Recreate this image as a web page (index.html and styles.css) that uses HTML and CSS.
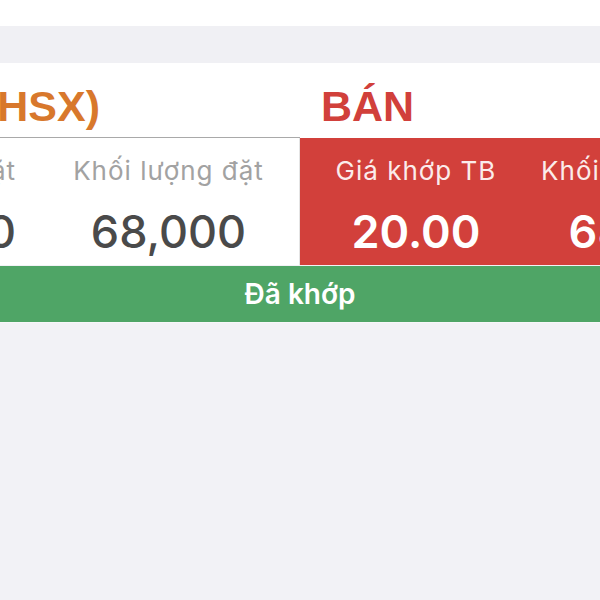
FILE: index.html
```html
<!DOCTYPE html>
<html lang="vi">

<head>
    <meta charset="UTF-8">
    <meta name="viewport" content="width=device-width, initial-scale=1.0">
    <title>Chi tiết lệnh</title>
    <link rel="stylesheet" href="styles.css">
</head>

<body>
    <div class="screen">
        <div class="top-space"></div>
        <div class="band"></div>

        <div class="ticket">
            <div class="ticket-head">
                <div class="head-symbol">HPG (HSX)</div>
                <div class="head-side">BÁN</div>
            </div>
            <div class="ticket-body">
                <div class="panel panel-order">
                    <div class="col col-end col-a">
                        <span class="label">Giá đặt</span>
                        <span class="value">20.00</span>
                    </div>
                    <div class="col col-b">
                        <span class="label">Khối lượng đặt</span>
                        <span class="value">68,000</span>
                    </div>
                </div>
                <div class="panel panel-match">
                    <div class="col col-c">
                        <span class="label">Giá khớp TB</span>
                        <span class="value">20.00</span>
                    </div>
                    <div class="col col-d">
                        <span class="label">Khối lượng khớp</span>
                        <span class="value">68,000</span>
                    </div>
                </div>
            </div>
        </div>

        <div class="status-bar">Đã khớp</div>
    </div>
</body>

</html>
```

FILE: styles.css
```css
body {
    margin: 0;
    background-color: #f2f2f6;
    font-family: 'Inter', 'Liberation Sans', sans-serif;
}

.screen {
    width: 600px;
    height: 600px;
    overflow: hidden;
}

.top-space {
    height: 26px;
    background-color: #fff;
}

.band {
    height: 37px;
    background-color: #f0f0f4;
}

.ticket {
    width: 900px;
    margin-left: -300px;
    background-color: #fff;
}

.ticket-head {
    display: flex;
    height: 75px;
}

.head-symbol,
.head-side {
    font-family: 'Liberation Sans', Arial, sans-serif;
    font-weight: bold;
    font-size: 43px;
    line-height: 48px;
    padding-top: 19px;
    box-sizing: border-box;
}

.head-symbol {
    flex: 0 0 600px;
    text-align: right;
    padding-right: 200px;
    color: #d8782c;
    border-bottom: 1px solid #a9a9a9;
}

.head-side {
    flex: 1;
    padding-left: 21px;
    color: #d1403b;
}

.ticket-body {
    display: flex;
    height: 127px;
}

.panel {
    display: flex;
    box-sizing: border-box;
}

.panel-order {
    flex: 0 0 600px;
    justify-content: flex-end;
    background-color: #fff;
    border-right: 1px solid #e4e4e4;
}

.panel-match {
    flex: 1;
    background-color: #d2403b;
}

.col {
    display: flex;
    flex-direction: column;
    align-items: center;
    flex-shrink: 0;
    padding-top: 18px;
    box-sizing: border-box;
}

.col-end {
    align-items: flex-end;
    padding-right: 22px;
}

.col-a {
    width: 180px;
}

.col-b {
    width: 261px;
}

.col-c {
    width: 232px;
}

.col-d {
    width: 232px;
}

.label {
    font-size: 26px;
    line-height: 30px;
    letter-spacing: 1px;
    margin-bottom: 20px;
    color: #a2a2a2;
    white-space: nowrap;
}

.value {
    font-size: 45px;
    line-height: 52px;
    font-weight: 500;
    color: #4a4a4a;
    white-space: nowrap;
}

.panel-match .label {
    color: #fbeceb;
}

.panel-match .value {
    color: #fff;
    font-weight: 600;
}

.status-bar {
    height: 56px;
    margin-top: 1px;
    background-color: #4fa566;
    border-bottom: 1px solid #f7f7f9;
    color: #fff;
    font-weight: 600;
    font-size: 28px;
    line-height: 56px;
    text-align: center;
}
```
